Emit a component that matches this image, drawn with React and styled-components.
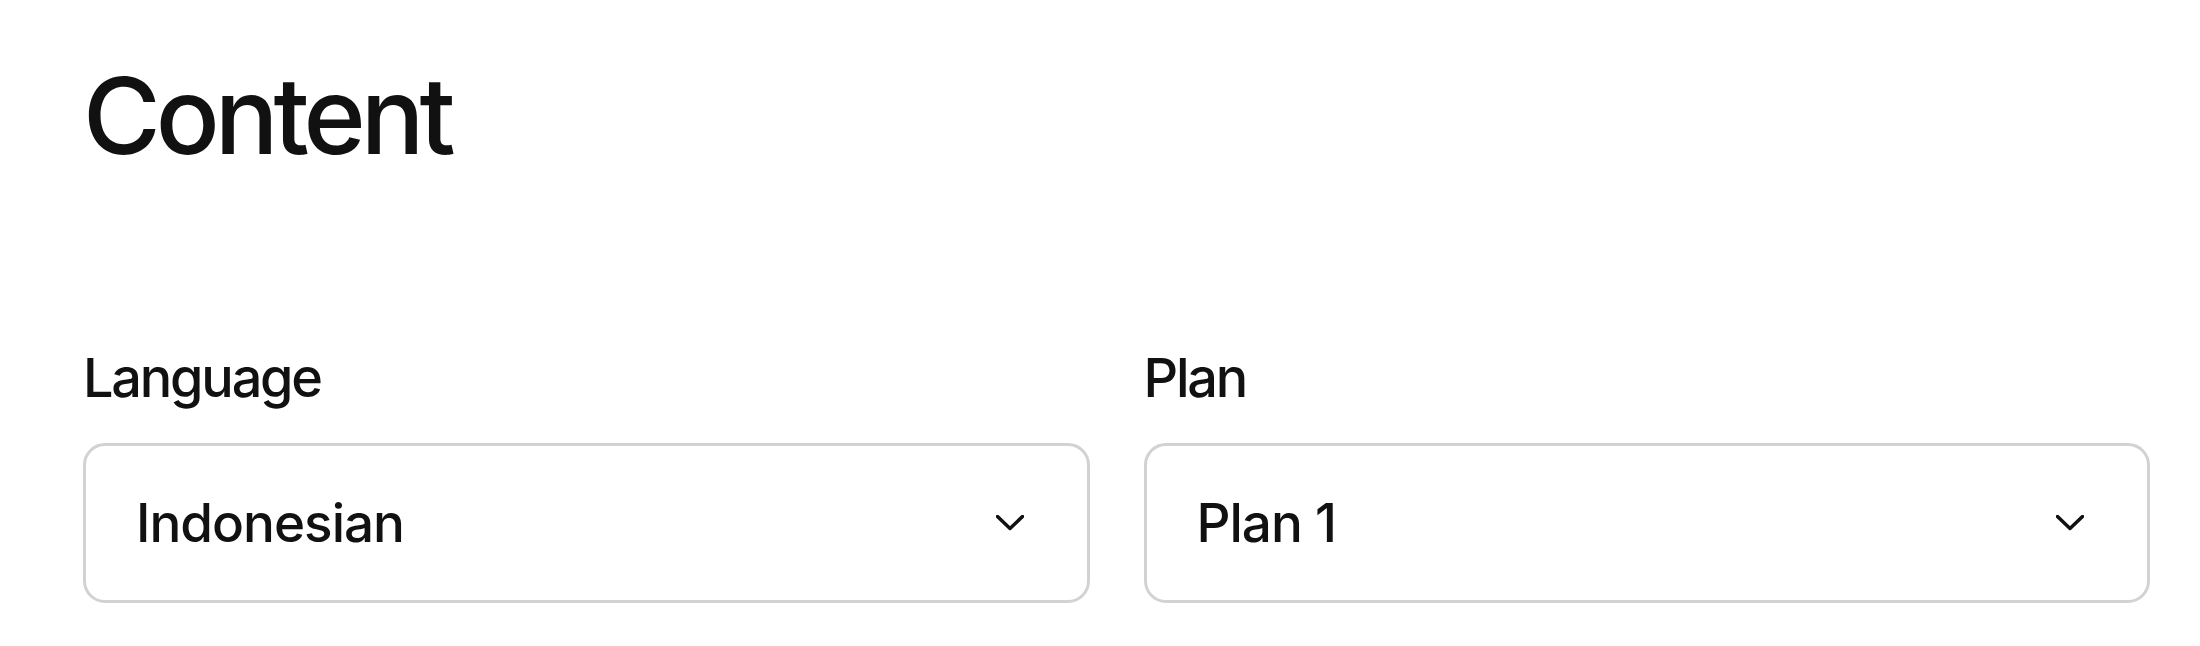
import React from 'react';
import styled, {createGlobalStyle} from 'styled-components';

const GlobalStyle = createGlobalStyle`
body {
  margin: 0;
  background: #ffffff;
  font-family: Inter, "Noto Sans", sans-serif;
  color: #111111;
}
`;

const Page = styled.div`
padding: 63px 50px 0 83px;
`;

const Title = styled.h1`
margin: 0;
font-size: 106px;
line-height: 1;
font-weight: 500;
letter-spacing: -5px;
`;

const Fields = styled.div`
display: grid;
grid-template-columns: 1fr 1fr;
column-gap: 54px;
margin-top: 182px;
`;

const Field = styled.label`
display: flex;
flex-direction: column;
gap: 38px;
`;

const Label = styled.span`
font-size: 54px;
line-height: 1;
font-weight: 500;
letter-spacing: -2.2px;
`;

const SelectBox = styled.div`
box-sizing: border-box;
height: 160px;
display: flex;
align-items: center;
justify-content: space-between;
padding: 0 63px 0 50px;
border: 3px solid #d2d2d2;
border-radius: 22px;
background: #ffffff;
font-size: 53px;
font-weight: 500;
letter-spacing: -1px;
cursor: pointer;
`;

const Chevron = () => (
    <svg width="28" height="16" viewBox="0 0 28 16" fill="none">
        <polyline points="1.5,1.5 14,13.5 26.5,1.5" stroke="#111" strokeWidth="3.5" strokeLinecap="round" strokeLinejoin="round"/>
    </svg>
);

const Select = ({label, value}) => (
    <Field>
        <Label>{label}</Label>
        <SelectBox>
            <span>{value}</span>
            <Chevron/>
        </SelectBox>
    </Field>
);

export default function App() {
    return (
        <Page>
            <GlobalStyle/>
            <Title>Content</Title>
            <Fields>
                <Select label="Language" value="Indonesian"/>
                <Select label="Plan" value="Plan 1"/>
            </Fields>
        </Page>
    );
}
